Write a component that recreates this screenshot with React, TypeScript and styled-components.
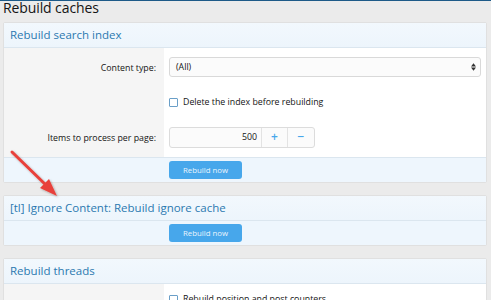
import React from 'react'
import styled, { createGlobalStyle } from 'styled-components'

const GlobalStyle = createGlobalStyle`
  body {
    margin: 0;
    background: #ebebeb;
    font-family: 'Open Sans', 'Noto Sans', sans-serif;
    color: #141414;
  }
`

const Page = styled.div`
  position: relative;
  border-top: 1px solid #1d5a88;
  padding: 0 4px 0 3px;
  height: 299px;
  overflow: hidden;
`

const Title = styled.h1`
  margin: -4px 0 0 0;
  font-size: 14px;
  line-height: 21px;
  font-weight: 400;
  letter-spacing: -0.1px;
  color: #141414;
`

const Block = styled.div<{ $gap?: number }>`
  background: #fff;
  border: 1px solid #e0e0e0;
  border-radius: 2px;
  margin-top: ${(p) => p.$gap ?? 0}px;
  margin-bottom: 12px;
`

const BlockHeader = styled.h2`
  margin: 0;
  height: 24px;
  line-height: 24px;
  padding: 0 6px;
  font-size: 11.5px;
  font-weight: 400;
  color: #2b79b0;
  background: linear-gradient(#f2f8fd, #edf5fc);
  border-bottom: 1px solid #dbe6ef;
`

const Row = styled.div`
  display: grid;
  grid-template-columns: 160px 1fr;
`

const Label = styled.div<{ $pad: string }>`
  background: #f5f5f5;
  text-align: right;
  padding: ${(p) => p.$pad};
  padding-right: 8px;
  font-size: 8.8px;
  color: #141414;
`

const Cell = styled.div<{ $pad: string }>`
  padding: ${(p) => p.$pad};
  font-size: 8.8px;
`

const Select = styled.div`
  height: 20px;
  box-sizing: border-box;
  border: 1px solid #d9d9d9;
  border-radius: 3px;
  background: #fbfbfb;
  display: flex;
  align-items: center;
  justify-content: space-between;
  padding: 0 4px 0 6px;
  font-size: 8.8px;
`

const Arrows = styled.svg`
  width: 5px;
  height: 8px;
`

const CheckRow = styled.label`
  display: flex;
  align-items: center;
  gap: 5px;
  font-size: 8.8px;
`

const CheckBox = styled.span`
  width: 7px;
  height: 7px;
  border: 1px solid #6a9fc8;
  border-radius: 1px;
  background: #fff;
`

const NumberGroup = styled.div`
  width: 146px;
  height: 21px;
  box-sizing: border-box;
  border: 1px solid #dcdcdc;
  border-radius: 3px;
  display: grid;
  grid-template-columns: 1fr 26px 27px;
  background: #fbfbfb;
`

const NumberValue = styled.div`
  text-align: right;
  padding-right: 4px;
  line-height: 19px;
  font-size: 8.8px;
`

const StepButton = styled.div`
  border-left: 1px solid #e3e3e3;
  color: #47a7eb;
  text-align: center;
  line-height: 18px;
  font-size: 12px;
  font-weight: 600;
`

const Footer = styled.div<{ $top?: boolean }>`
  display: grid;
  grid-template-columns: 160px 1fr;
  background: #eef6fd;
  border-top: ${(p) => (p.$top ? '1px solid #dbe6ef' : 'none')};
  padding: 3px 0 3px;
`

const Button = styled.button`
  grid-column: 2;
  margin-left: 5px;
  width: 73px;
  height: 18px;
  border: none;
  border-radius: 3px;
  background: #47a7eb;
  color: #eaf5fd;
  font-family: inherit;
  font-size: 7.8px;
  padding: 0;
`

const Arrow = styled.svg`
  position: absolute;
  left: 6px;
  top: 146px;
  width: 60px;
  height: 56px;
`

export default function App() {
  return (
    <Page>
      <GlobalStyle />
      <Title>Rebuild caches</Title>

      <Block $gap={4}>
        <BlockHeader>Rebuild search index</BlockHeader>
        <Row>
          <Label $pad="14px 0 10px">Content type:</Label>
          <Cell $pad="9px 5px 9px">
            <Select>
              (All)
              <Arrows viewBox="0 0 6 9">
                <path d="M0 4 L3 0 L6 4 Z M0 5 L3 9 L6 5 Z" fill="#333" />
              </Arrows>
            </Select>
          </Cell>
        </Row>
        <Row>
          <Label $pad="0" />
          <Cell $pad="10px 5px 7px">
            <CheckRow>
              <CheckBox />
              Delete the index before rebuilding
            </CheckRow>
          </Cell>
        </Row>
        <Row>
          <Label $pad="17px 0 10px">Items to process per page:</Label>
          <Cell $pad="12px 5px 9px">
            <NumberGroup>
              <NumberValue>500</NumberValue>
              <StepButton>+</StepButton>
              <StepButton>−</StepButton>
            </NumberGroup>
          </Cell>
        </Row>
        <Footer $top>
          <Button>Rebuild now</Button>
        </Footer>
      </Block>

      <Block>
        <BlockHeader>[tl] Ignore Content: Rebuild ignore cache</BlockHeader>
        <Footer>
          <Button>Rebuild now</Button>
        </Footer>
      </Block>

      <Block $gap={2}>
        <BlockHeader>Rebuild threads</BlockHeader>
        <Row>
          <Label $pad="0" />
          <Cell $pad="9px 5px 10px">
            <CheckRow>
              <CheckBox />
              Rebuild position and post counters
            </CheckRow>
          </Cell>
        </Row>
      </Block>

      <Arrow viewBox="0 0 60 56">
        <defs>
          <filter id="sh" x="-20%" y="-20%" width="140%" height="140%">
            <feDropShadow dx="1" dy="1" stdDeviation="1" floodColor="#000" floodOpacity="0.3" />
          </filter>
        </defs>
        <g filter="url(#sh)">
          <line x1="6" y1="5" x2="42" y2="40" stroke="#e8413b" strokeWidth="3" strokeLinecap="round" />
          <path d="M51 49 L34 41 L43 32 Z" fill="#e8413b" />
        </g>
      </Arrow>
    </Page>
  )
}
